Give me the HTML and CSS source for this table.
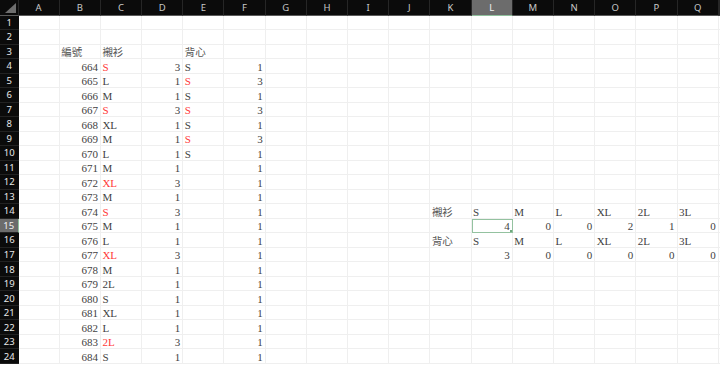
FILE: index.html
```html
<!DOCTYPE html>
<html lang="zh-Hant">
<head>
<meta charset="utf-8">
<title>Sheet</title>
<link rel="stylesheet" href="styles.css">
</head>
<body>
<div class="sheet">
  <div class="row head"><b class="corner"></b><b>A</b><b>B</b><b>C</b><b>D</b><b>E</b><b>F</b><b>G</b><b>H</b><b>I</b><b>J</b><b>K</b><b class="sel">L</b><b>M</b><b>N</b><b>O</b><b>P</b><b>Q</b><b></b></div>

  <div class="row"><b class="rh">1</b><span></span><span></span><span></span><span></span><span></span><span></span><span></span><span></span><span></span><span></span><span></span><span></span><span></span><span></span><span></span><span></span><span></span><span></span></div>
  <div class="row"><b class="rh">2</b><span></span><span></span><span></span><span></span><span></span><span></span><span></span><span></span><span></span><span></span><span></span><span></span><span></span><span></span><span></span><span></span><span></span><span></span></div>
  <div class="row"><b class="rh">3</b><span></span><span class="zh">編號</span><span class="zh">襯衫</span><span></span><span class="zh">背心</span><span></span><span></span><span></span><span></span><span></span><span></span><span></span><span></span><span></span><span></span><span></span><span></span><span></span></div>

  <div class="row"><b class="rh">4</b><span></span><span class="n">664</span><span class="red">S</span><span class="n">3</span><span>S</span><span class="n">1</span><span></span><span></span><span></span><span></span><span></span><span></span><span></span><span></span><span></span><span></span><span></span><span></span></div>
  <div class="row"><b class="rh">5</b><span></span><span class="n">665</span><span>L</span><span class="n">1</span><span class="red">S</span><span class="n">3</span><span></span><span></span><span></span><span></span><span></span><span></span><span></span><span></span><span></span><span></span><span></span><span></span></div>
  <div class="row"><b class="rh">6</b><span></span><span class="n">666</span><span>M</span><span class="n">1</span><span>S</span><span class="n">1</span><span></span><span></span><span></span><span></span><span></span><span></span><span></span><span></span><span></span><span></span><span></span><span></span></div>
  <div class="row"><b class="rh">7</b><span></span><span class="n">667</span><span class="red">S</span><span class="n">3</span><span class="red">S</span><span class="n">3</span><span></span><span></span><span></span><span></span><span></span><span></span><span></span><span></span><span></span><span></span><span></span><span></span></div>
  <div class="row"><b class="rh">8</b><span></span><span class="n">668</span><span>XL</span><span class="n">1</span><span>S</span><span class="n">1</span><span></span><span></span><span></span><span></span><span></span><span></span><span></span><span></span><span></span><span></span><span></span><span></span></div>
  <div class="row"><b class="rh">9</b><span></span><span class="n">669</span><span>M</span><span class="n">1</span><span class="red">S</span><span class="n">3</span><span></span><span></span><span></span><span></span><span></span><span></span><span></span><span></span><span></span><span></span><span></span><span></span></div>
  <div class="row"><b class="rh">10</b><span></span><span class="n">670</span><span>L</span><span class="n">1</span><span>S</span><span class="n">1</span><span></span><span></span><span></span><span></span><span></span><span></span><span></span><span></span><span></span><span></span><span></span><span></span></div>
  <div class="row"><b class="rh">11</b><span></span><span class="n">671</span><span>M</span><span class="n">1</span><span></span><span class="n">1</span><span></span><span></span><span></span><span></span><span></span><span></span><span></span><span></span><span></span><span></span><span></span><span></span></div>
  <div class="row"><b class="rh">12</b><span></span><span class="n">672</span><span class="red">XL</span><span class="n">3</span><span></span><span class="n">1</span><span></span><span></span><span></span><span></span><span></span><span></span><span></span><span></span><span></span><span></span><span></span><span></span></div>
  <div class="row"><b class="rh">13</b><span></span><span class="n">673</span><span>M</span><span class="n">1</span><span></span><span class="n">1</span><span></span><span></span><span></span><span></span><span></span><span></span><span></span><span></span><span></span><span></span><span></span><span></span></div>
  <div class="row"><b class="rh">14</b><span></span><span class="n">674</span><span class="red">S</span><span class="n">3</span><span></span><span class="n">1</span><span></span><span></span><span></span><span></span><span class="zh">襯衫</span><span>S</span><span>M</span><span>L</span><span>XL</span><span>2L</span><span>3L</span><span></span></div>
  <div class="row"><b class="rh selrow">15</b><span></span><span class="n">675</span><span>M</span><span class="n">1</span><span></span><span class="n">1</span><span></span><span></span><span></span><span></span><span></span><span class="n active">4</span><span class="n">0</span><span class="n">0</span><span class="n">2</span><span class="n">1</span><span class="n">0</span><span></span></div>
  <div class="row"><b class="rh">16</b><span></span><span class="n">676</span><span>L</span><span class="n">1</span><span></span><span class="n">1</span><span></span><span></span><span></span><span></span><span class="zh">背心</span><span>S</span><span>M</span><span>L</span><span>XL</span><span>2L</span><span>3L</span><span></span></div>
  <div class="row"><b class="rh">17</b><span></span><span class="n">677</span><span class="red">XL</span><span class="n">3</span><span></span><span class="n">1</span><span></span><span></span><span></span><span></span><span></span><span class="n">3</span><span class="n">0</span><span class="n">0</span><span class="n">0</span><span class="n">0</span><span class="n">0</span><span></span></div>
  <div class="row"><b class="rh">18</b><span></span><span class="n">678</span><span>M</span><span class="n">1</span><span></span><span class="n">1</span><span></span><span></span><span></span><span></span><span></span><span></span><span></span><span></span><span></span><span></span><span></span><span></span></div>
  <div class="row"><b class="rh">19</b><span></span><span class="n">679</span><span>2L</span><span class="n">1</span><span></span><span class="n">1</span><span></span><span></span><span></span><span></span><span></span><span></span><span></span><span></span><span></span><span></span><span></span><span></span></div>
  <div class="row"><b class="rh">20</b><span></span><span class="n">680</span><span>S</span><span class="n">1</span><span></span><span class="n">1</span><span></span><span></span><span></span><span></span><span></span><span></span><span></span><span></span><span></span><span></span><span></span><span></span></div>
  <div class="row"><b class="rh">21</b><span></span><span class="n">681</span><span>XL</span><span class="n">1</span><span></span><span class="n">1</span><span></span><span></span><span></span><span></span><span></span><span></span><span></span><span></span><span></span><span></span><span></span><span></span></div>
  <div class="row"><b class="rh">22</b><span></span><span class="n">682</span><span>L</span><span class="n">1</span><span></span><span class="n">1</span><span></span><span></span><span></span><span></span><span></span><span></span><span></span><span></span><span></span><span></span><span></span><span></span></div>
  <div class="row"><b class="rh">23</b><span></span><span class="n">683</span><span class="red">2L</span><span class="n">3</span><span></span><span class="n">1</span><span></span><span></span><span></span><span></span><span></span><span></span><span></span><span></span><span></span><span></span><span></span><span></span></div>
  <div class="row"><b class="rh">24</b><span></span><span class="n">684</span><span>S</span><span class="n">1</span><span></span><span class="n">1</span><span></span><span></span><span></span><span></span><span></span><span></span><span></span><span></span><span></span><span></span><span></span><span></span></div>
</div>
</body>
</html>
```

FILE: styles.css
```css
html, body {
  margin: 0;
  padding: 0;
  background: #ffffff;
}

body {
  width: 720px;
  height: 365px;
  overflow: hidden;
}

.sheet {
  display: flex;
  flex-direction: column;
  width: 720px;
  font-family: "Liberation Serif", "Noto Sans CJK TC", serif;
  font-size: 11px;
  color: #424242;
}

.row {
  display: grid;
  grid-template-columns: 18.5px repeat(17, 41.19px) 1fr;
  height: 14.52px;
}

.row > span {
  box-sizing: border-box;
  display: flex;
  align-items: flex-end;
  padding: 0 1.5px 0 1.5px;
  line-height: 12px;
  white-space: nowrap;
  overflow: hidden;
  border-right: 1px solid #efefef;
  border-bottom: 1px solid #efefef;
}

.row > span.n {
  justify-content: flex-end;
  padding-right: 2px;
}

.row > span.red {
  color: #ff3838;
}

.row > span.zh {
  font-family: "Noto Sans CJK TC", "Liberation Serif", sans-serif;
  font-size: 10.5px;
  color: #555555;
  line-height: 13px;
}

.row > span.active {
  position: relative;
  border: 1px solid #94c2a0;
}

.row > span.active::after {
  content: "";
  position: absolute;
  right: -2px;
  bottom: -2px;
  width: 3px;
  height: 3px;
  background: #6fa87e;
  border: 1px solid #ffffff;
}

/* header row */
.head {
  height: 15.5px;
}

.head > b {
  box-sizing: border-box;
  display: flex;
  align-items: center;
  justify-content: center;
  background: #0b0b0b;
  color: #c8c8c8;
  font-family: "Noto Sans", "Liberation Sans", sans-serif;
  font-weight: 400;
  font-size: 9.5px;
  border-right: 1px solid #262626;
  border-bottom: 1px solid #5a5a5a;
  overflow: hidden;
}

.head > b.sel {
  background: #6c6c6c;
  color: #f0f0f0;
  border-bottom: 1px solid #8fbf9c;
}

.head > b.corner {
  position: relative;
  border-right: 1px solid #262626;
}

.head > b.corner::after {
  content: "";
  position: absolute;
  right: 2px;
  bottom: 2px;
  width: 0;
  height: 0;
  border-left: 11px solid transparent;
  border-bottom: 10px solid #6e6e6e;
}

/* row headers */
.rh {
  box-sizing: border-box;
  display: flex;
  align-items: center;
  justify-content: center;
  background: #0b0b0b;
  color: #e8e8e8;
  font-family: "Noto Sans", "Liberation Sans", sans-serif;
  font-weight: 400;
  font-size: 9.5px;
  border-bottom: 1px solid #222222;
}

.rh.selrow {
  background: #6c6c6c;
  color: #f2f2f2;
  border-right: 1px solid #8fbf9c;
}
```
